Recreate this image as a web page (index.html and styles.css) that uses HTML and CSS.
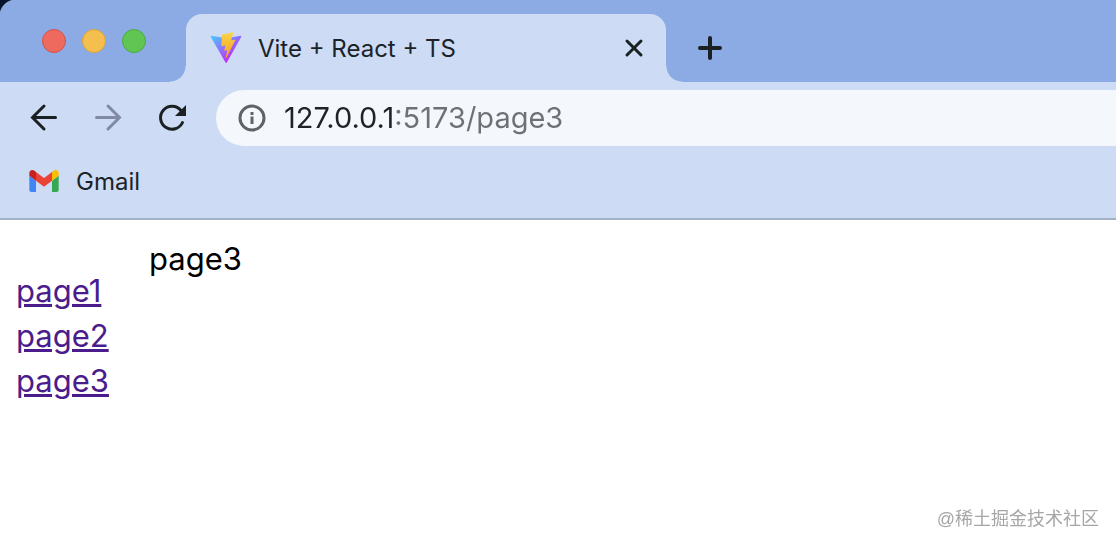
FILE: index.html
```
<!DOCTYPE html>
<html lang="en">
<head>
    <meta charset="UTF-8">
    <title>Vite + React + TS</title>
    <link rel="stylesheet" href="styles.css">
</head>
<body>
    <header class="browser">
        <div class="tabbar">
            <div class="lights">
                <button class="light red" aria-label="Close window"></button>
                <button class="light yellow" aria-label="Minimize"></button>
                <button class="light green" aria-label="Zoom"></button>
            </div>
            <div class="tab">
                <svg class="favicon" viewBox="0 0 410 404">
                    <defs>
                        <linearGradient id="a" x1="6" y1="33" x2="235" y2="344" gradientUnits="userSpaceOnUse">
                            <stop stop-color="#41d1ff"/>
                            <stop offset="1" stop-color="#bd34fe"/>
                        </linearGradient>
                        <linearGradient id="b" x1="194" y1="9" x2="236" y2="293" gradientUnits="userSpaceOnUse">
                            <stop stop-color="#f8d650"/>
                            <stop offset=".08" stop-color="#f8d048"/>
                            <stop offset="1" stop-color="#f5a623"/>
                        </linearGradient>
                    </defs>
                    <path fill="url(#a)" d="M399.641 59.525L215.643 388.545C211.844 395.338 202.084 395.378 198.228 388.618L10.582 59.556C6.381 52.19 12.68 43.267 21.028 44.759L205.223 77.682C206.398 77.892 207.601 77.89 208.776 77.676L389.119 44.806C397.439 43.289 403.768 52.143 399.641 59.525Z"/>
                    <path fill="url(#b)" d="M292.965 1.574L156.801 28.255C154.563 28.694 152.906 30.59 152.771 32.866L144.395 174.33C144.198 177.662 147.258 180.248 150.51 179.498L188.42 170.749C191.967 169.931 195.172 173.055 194.443 176.622L183.18 231.775C182.422 235.487 185.907 238.661 189.532 237.56L212.947 230.446C216.577 229.344 220.065 232.527 219.297 236.242L201.398 322.875C200.278 328.294 207.486 331.249 210.492 326.603L212.5 323.5L323.454 102.072C325.312 98.365 322.108 94.137 318.036 94.923L279.014 102.454C275.347 103.161 272.227 99.746 273.262 96.158L298.731 7.867C299.767 4.273 296.636 .855 292.965 1.574Z"/>
                </svg>
                <span class="tab-title">Vite + React + TS</span>
                <button class="icon-btn small" aria-label="Close tab">
                    <svg viewBox="0 0 24 24"><path d="M5 5l14 14M19 5L5 19"/></svg>
                </button>
            </div>
            <button class="icon-btn new-tab" aria-label="New tab">
                <svg viewBox="0 0 32 32"><path d="M16 6v20M6 16h20"/></svg>
            </button>
        </div>

        <div class="toolbar">
            <button class="icon-btn" aria-label="Back">
                <svg viewBox="0 0 32 32"><path d="M27.500 15.500H4.500M16 4L4.500 15.500l11.500 11.500"/></svg>
            </button>
            <button class="icon-btn" aria-label="Forward" disabled>
                <svg viewBox="0 0 32 32"><path d="M4.500 15.500h23M16 4l11.500 11.500L16 27"/></svg>
            </button>
            <button class="icon-btn" aria-label="Reload">
                <svg viewBox="0 0 32 32"><path d="M26.500 20.500A11.500 11.500 0 1 1 25 8.500"/><path class="solid" d="M30 3v11H19z"/></svg>
            </button>
            <div class="omnibox">
                <svg class="info" viewBox="0 0 28 28"><circle cx="14" cy="14" r="12"/><path d="M14 12.500V20M14 8v3"/></svg>
                <input class="url" type="text" aria-label="Address" value="127.0.0.1:5173/page3" spellcheck="false">
            </div>
        </div>

        <div class="bookmarks">
            <a class="bookmark" href="#">
                <svg class="gmail" viewBox="52 42 88 66">
                    <path fill="#4285f4" d="M58 108h14V74L52 59v43c0 3.32 2.690 6 6 6"/>
                    <path fill="#34a853" d="M120 108h14c3.320 0 6-2.690 6-6V59l-20 15"/>
                    <path fill="#fbbc04" d="M120 48v26l20-15v-8c0-7.420-8.470-11.650-14.400-7.200"/>
                    <path fill="#ea4335" d="M72 74V48l24 18 24-18v26L96 92"/>
                    <path fill="#c5221f" d="M52 51v8l20 15V48l-5.600-4.200c-5.940-4.450-14.400-.220-14.400 7.200"/>
                </svg>
                Gmail
            </a>
        </div>
    </header>

    <div class="page">
        <ul class="nav">
            <li><a href="#">page1</a></li>
            <li><a href="#">page2</a></li>
            <li><a href="#">page3</a></li>
        </ul>
        <main>page3</main>
    </div>
    <div class="watermark">@稀土掘金技术社区</div>
</body>
</html>
```
FILE: styles.css
```
* {
    box-sizing: border-box;
}
body {
    margin: 0;
    background: #fff;
    color: #000;
    font-family: Inter, "Liberation Sans", sans-serif;
}
button {
    padding: 0;
    border: 0;
    background: none;
}
.browser {
    background: #cddbf4;
    border-bottom: 2px solid #a3b1c6;
    color: #1b2328;
    font-size: 24px;
}

/* tab strip */
.tabbar {
    display: flex;
    align-items: center;
    height: 82px;
    padding-top: 14px;
    background: radial-gradient(circle at 16px 16px, #8cabe4 16px, #06152a 17px) 0 0 / 16px 16px no-repeat, #8cabe4;
}
.lights {
    display: flex;
    gap: 16px;
    width: 186px;
    padding-left: 42px;
    margin-top: -14px;
}
.light {
    width: 24px;
    height: 24px;
    border-radius: 50%;
}
.red {
    background: #ee6a5e;
    border: 1px solid #d2544a;
}
.yellow {
    background: #f5bf4f;
    border: 1px solid #d9a23d;
}
.green {
    background: #61c554;
    border: 1px solid #4caa41;
}
.tab {
    position: relative;
    display: flex;
    align-items: center;
    gap: 16px;
    width: 480px;
    height: 68px;
    padding: 0 20px 0 24px;
    border-radius: 16px 16px 0 0;
    background: #cddbf4;
}
/* the curved feet on both sides of the tab */
.tab::before,
.tab::after {
    content: "";
    position: absolute;
    bottom: 0;
    width: 16px;
    height: 16px;
}
.tab::before {
    right: 100%;
    background: radial-gradient(circle at 0 0, transparent 15px, #cddbf4 16px);
}
.tab::after {
    left: 100%;
    background: radial-gradient(circle at 100% 0, transparent 15px, #cddbf4 16px);
}
.favicon {
    width: 32px;
    height: 32px;
}
.tab-title {
    flex: 1;
}

.icon-btn {
    display: flex;
    width: 32px;
    height: 32px;
    color: #1b2023;
}
.icon-btn svg {
    width: 100%;
    height: 100%;
    fill: none;
    stroke: currentColor;
    stroke-width: 3;
    stroke-linecap: round;
}
.icon-btn .solid {
    fill: currentColor;
    stroke: none;
}
.icon-btn:disabled {
    color: #808ba3;
}
.small {
    width: 24px;
    height: 24px;
}
.new-tab {
    margin-left: 28px;
}
.new-tab svg {
    stroke-width: 4;
}

/* address row */
.toolbar {
    display: flex;
    align-items: center;
    gap: 32px;
    padding: 8px 0 8px 28px;
}
.omnibox {
    display: flex;
    flex: 1;
    align-items: center;
    gap: 18px;
    height: 56px;
    margin-left: -4px;
    padding-left: 22px;
    border-radius: 28px 0 0 28px;
    background: #f4f8fc;
}
.info {
    width: 28px;
    height: 28px;
    fill: none;
    stroke: #5f6368;
    stroke-width: 3;
}
.url {
    flex: 1;
    min-width: 0;
    padding: 0;
    border: 0;
    outline: 0;
    /* host is dark, port and path are grey */
    background: linear-gradient(to right, #1f2327 111px, #6d7175 0);
    -webkit-background-clip: text;
    background-clip: text;
    color: transparent;
    caret-color: #1f2327;
    font: 29px/40px Inter, "Liberation Sans", sans-serif;
}

.bookmarks {
    display: flex;
    height: 64px;
    padding: 0 28px;
}
.bookmark {
    display: flex;
    align-items: center;
    gap: 16px;
    height: 54px;
    color: inherit;
    text-decoration: none;
}
.gmail {
    width: 32px;
    height: 22px;
}

/* page content */
.page {
    display: flex;
    gap: 40px;
    padding: 16px;
    font-size: 31px;
    line-height: 45px;
}
.nav {
    margin: 32px 0;
    padding: 0;
    list-style: none;
}
.nav a {
    color: #4b1d8c;
}
.watermark {
    position: fixed;
    right: 17px;
    bottom: 14px;
    color: #a6a6a6;
    font: 18px/26px "Liberation Sans", "Noto Sans CJK SC", sans-serif;
}
```
